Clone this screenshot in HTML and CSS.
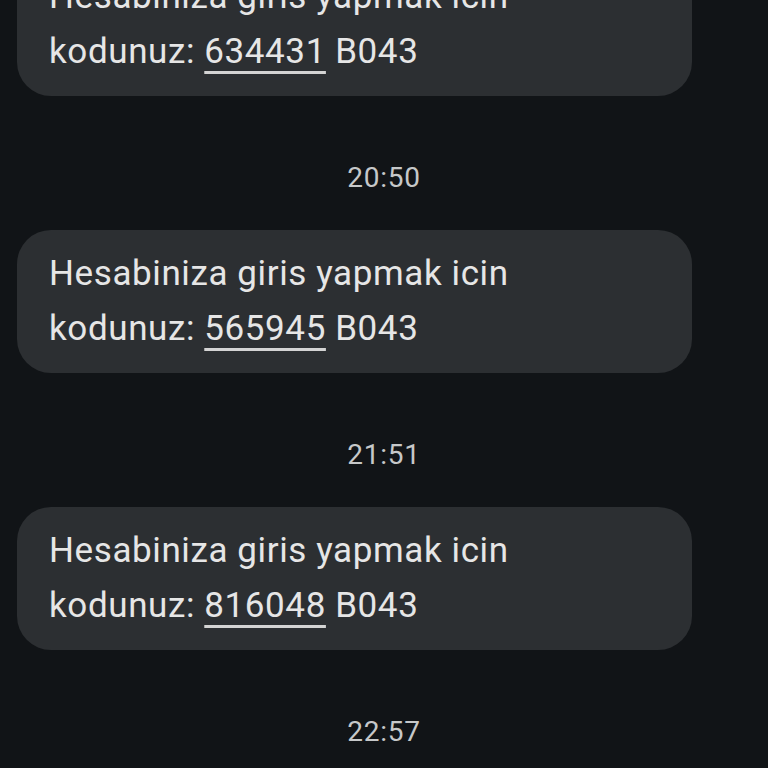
FILE: index.html
```html
<!DOCTYPE html>
<html lang="tr">
<head>
<meta name="viewport" content="width=device-width, initial-scale=1">
<link rel="stylesheet" href="styles.css">
</head>
<body>
	<div id="thread">
		<div class="bubble first">
			<p>Hesabiniza giris yapmak icin</p>
			<p>kodunuz: <span class="code">634431</span> B043</p>
		</div>
		<div class="stamp">20:50</div>
		<div class="bubble">
			<p>Hesabiniza giris yapmak icin</p>
			<p>kodunuz: <span class="code">565945</span> B043</p>
		</div>
		<div class="stamp">21:51</div>
		<div class="bubble">
			<p>Hesabiniza giris yapmak icin</p>
			<p>kodunuz: <span class="code">816048</span> B043</p>
		</div>
		<div class="stamp">22:57</div>
	</div>
</body>
</html>
```

FILE: styles.css
```css
:root {
	--bg:#111417;
	--bubble:#2c2f32;
	--text:#e6e6e6;
	--stamp:#c6c8c9;
}

* {
	box-sizing:border-box;
}

html, body {
	margin:0;
	height:100%;
	overflow:hidden;
	background-color:var(--bg);
	font-family:Roboto, "Liberation Sans", sans-serif;
}

#thread{
	display:flex;
	flex-direction:column;
	padding:0 76px 0 17px;
}

.bubble{
	height:143px;
	background-color:var(--bubble);
	border-radius:34px;
	padding:16px 20px 0 32px;
	color:var(--text);
	font-size:35px;
	line-height:55px;
	letter-spacing:0.6px;
	white-space:nowrap;
}

.bubble.first{
	margin-top:-47px;
}

.bubble p{
	margin:0;
}

.code{
	text-decoration:underline;
	text-decoration-thickness:3px;
	text-underline-offset:8px;
	text-decoration-color:#d4d4d4;
}

.stamp{
	height:134px;
	padding-top:68px;
	text-align:center;
	margin-left:59px;
	color:var(--stamp);
	font-size:28px;
	line-height:28px;
	letter-spacing:0.8px;
}
```
